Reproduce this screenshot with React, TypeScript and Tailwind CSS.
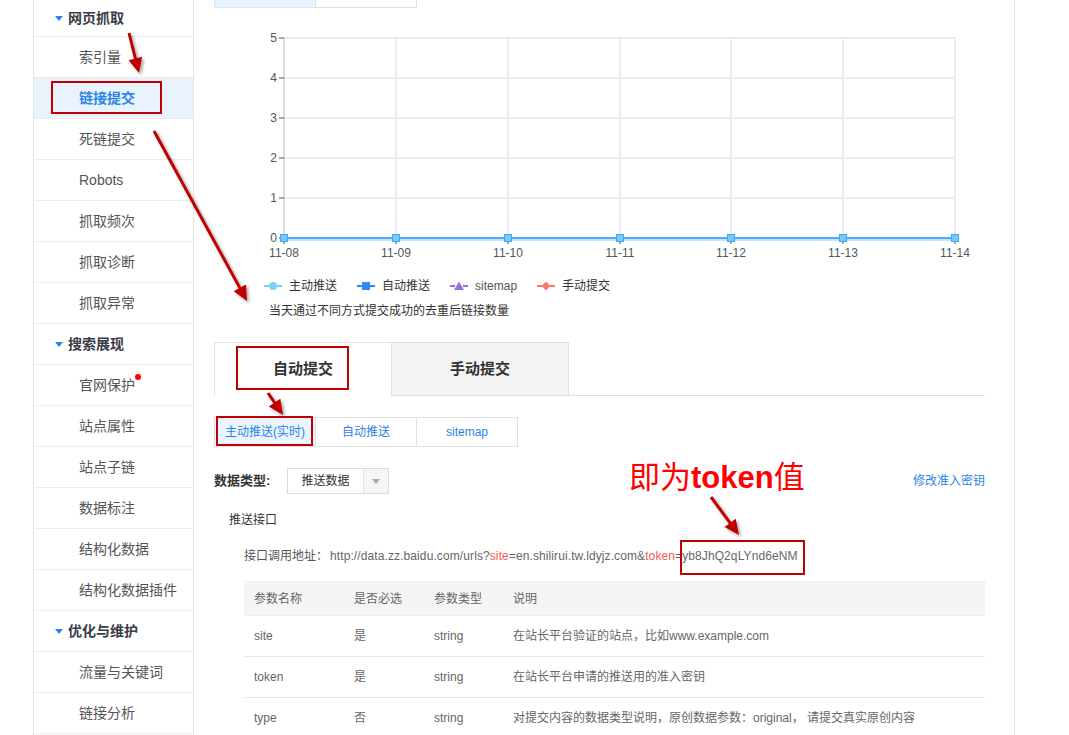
import React from "react";

const font = "font-['Liberation_Sans','Noto_Sans_CJK_SC',sans-serif]";

const sections = [
  {
    title: "网页抓取",
    items: ["索引量", "链接提交", "死链提交", "Robots", "抓取频次", "抓取诊断", "抓取异常"],
  },
  {
    title: "搜索展现",
    items: ["官网保护", "站点属性", "站点子链", "数据标注", "结构化数据", "结构化数据插件"],
  },
  { title: "优化与维护", items: ["流量与关键词", "链接分析"] },
];

const xs = [70, 182, 294, 406, 517, 629, 741];
const ys = [210, 170, 130, 90, 50, 10];
const dates = ["11-08", "11-09", "11-10", "11-11", "11-12", "11-13", "11-14"];

const rows = [
  { name: "site", req: "是", type: "string", desc: <>在站长平台验证的站点，比如www.example.com</> },
  { name: "token", req: "是", type: "string", desc: <>在站长平台申请的推送用的准入密钥</> },
  {
    name: "type",
    req: "否",
    type: "string",
    desc: <>对提交内容的数据类型说明，原创数据参数：original， 请提交真实原创内容</>,
  },
];

const Sidebar = () => (
  <aside className="ml-[33px] w-[161px] shrink-0 border-x border-[#e6e6e6] bg-white">
    {sections.map((s, si) => (
      <div key={s.title}>
        <div
          className={`${si === 0 ? "h-[37px]" : "h-[41px]"} flex items-center border-b border-[#ececec] pl-[21px]`}
        >
          <span className="mr-[5px] h-0 w-0 border-x-[4px] border-t-[5px] border-x-transparent border-t-[#2b84e8]" />
          <span className="text-[14px] font-bold text-[#3a3a48]">{s.title}</span>
        </div>
        {s.items.map((it) => (
          <div
            key={it}
            className={`flex h-[41px] items-center border-b border-[#ececec] pl-[45px] text-[14px] ${
              it === "链接提交" ? "bg-[#e8f3fd] font-bold text-[#2b84e8]" : "text-[#555]"
            }`}
          >
            <span className="relative">
              {it}
              {it === "官网保护" && (
                <span className="absolute -right-[6px] top-[-1px] h-[6px] w-[6px] rounded-full bg-[#ff0000]" />
              )}
            </span>
          </div>
        ))}
      </div>
    ))}
  </aside>
);

const Chart = () => (
  <svg width="771" height="236" className="mt-[20px] block">
    {ys.map((y) => (
      <line key={y} x1={70} x2={741} y1={y} y2={y} stroke="#ececec" strokeWidth={2} />
    ))}
    {xs.map((x) => (
      <line key={x} x1={x} x2={x} y1={10} y2={210} stroke="#ececec" strokeWidth={2} />
    ))}
    <line x1={70} x2={70} y1={10} y2={210} stroke="#dcdcdc" strokeWidth={2} />
    {ys.map((y, i) => (
      <g key={"y" + y}>
        <line x1={65} x2={70} y1={y} y2={y} stroke="#555" strokeWidth={1} />
        <text x={63} y={y + 4} textAnchor="end" fontSize="12" fill="#555" fontFamily="Liberation Sans">
          {i}
        </text>
      </g>
    ))}
    {xs.map((x, i) => (
      <g key={"x" + x}>
        <line x1={x} x2={x} y1={210} y2={216} stroke="#555" strokeWidth={1} />
        <text x={x} y={229} textAnchor="middle" fontSize="12" fill="#555" fontFamily="Liberation Sans">
          {dates[i]}
        </text>
      </g>
    ))}
    <line x1={70} x2={741} y1={211} y2={211} stroke="#bfe4fb" strokeWidth={4} />
    <line x1={70} x2={741} y1={210} y2={210} stroke="#4eaeee" strokeWidth={2} />
    {xs.map((x) => (
      <rect key={"m" + x} x={x - 3.5} y={206.5} width={7} height={7} fill="#70cbff" stroke="#46a6ea" strokeWidth={1} />
    ))}
  </svg>
);

const LegendIcon = ({ color, shape }: { color: string; shape: string }) => (
  <svg width="18" height="10" className="mr-[7px]">
    <line x1={0} x2={5} y1={5} y2={5} stroke={color} strokeWidth={2} />
    <line x1={13} x2={18} y1={5} y2={5} stroke={color} strokeWidth={2} />
    {shape === "circle" && <circle cx={9} cy={5} r={4} fill={color} />}
    {shape === "square" && <rect x={5} y={1} width={8} height={8} fill={color} />}
    {shape === "triangle" && <polygon points="9,0.5 14,9 4,9" fill={color} />}
    {shape === "diamond" && <polygon points="9,0.5 13.5,5 9,9.5 4.5,5" fill={color} />}
  </svg>
);

const legend = [
  { label: "主动推送", color: "#7fd0f6", shape: "circle" },
  { label: "自动推送", color: "#2d8cf0", shape: "square" },
  { label: "sitemap", color: "#9a72da", shape: "triangle" },
  { label: "手动提交", color: "#f77b6d", shape: "diamond" },
];

const Arrow = ({ x1, y1, x2, y2 }: { x1: number; y1: number; x2: number; y2: number }) => {
  const dx = x2 - x1;
  const dy = y2 - y1;
  const len = Math.hypot(dx, dy);
  const ux = dx / len;
  const uy = dy / len;
  const hl = 15;
  const hw = 7;
  const bx = x2 - ux * hl;
  const by = y2 - uy * hl;
  const pts = `${x2},${y2} ${bx - uy * hw},${by + ux * hw} ${bx + uy * hw},${by - ux * hw}`;
  return (
    <g filter="url(#shadow)">
      <line x1={x1} y1={y1} x2={bx + ux * 2} y2={by + uy * 2} stroke="#c00000" strokeWidth={3} />
      <polygon points={pts} fill="#c00000" />
    </g>
  );
};

const Annotations = () => (
  <>
    <svg width="1069" height="735" className="pointer-events-none absolute left-0 top-0">
      <defs>
        <filter id="shadow" x="-20%" y="-20%" width="140%" height="140%">
          <feDropShadow dx="2" dy="2" stdDeviation="1.5" floodColor="#000" floodOpacity="0.35" />
        </filter>
      </defs>
      <Arrow x1={129} y1={33} x2={139} y2={73} />
      <Arrow x1={154} y1={131} x2={247} y2={301} />
      <Arrow x1={268} y1={393} x2={283} y2={415} />
      <Arrow x1={711} y1={497} x2={739} y2={535} />
      <rect x={52} y={82} width={109} height={31} fill="none" stroke="#c00000" strokeWidth={2} />
      <rect x={237} y={347} width={111} height={42} fill="none" stroke="#c00000" strokeWidth={2} />
      <rect x={217} y={417} width={95} height={28} fill="none" stroke="#c00000" strokeWidth={2} />
      <rect x={681} y={541} width={123} height={33} fill="none" stroke="#c00000" strokeWidth={2} />
    </svg>
    <div className="pointer-events-none absolute left-[629px] top-[458px] text-[31px] leading-[40px] text-[#ff0000]">
      即为<span className="font-bold">token</span>值
    </div>
  </>
);

export default function App() {
  return (
    <div className={`relative flex h-[735px] w-[1069px] overflow-hidden bg-white ${font}`}>
      <Sidebar />
      <main className="w-[821px] shrink-0 border-r border-[#e8e8e8] pl-[20px] pr-[29px]">
        <div className="-mt-[22px] flex">
          <div className="h-[30px] w-[102px] border border-[#d6e8f8] bg-[#e8f3fd]" />
          <div className="-ml-px h-[30px] w-[102px] border border-[#e0e0e0] bg-white" />
        </div>

        <Chart />

        <div className="mt-[14px] flex h-[16px] items-center pl-[50px] text-[12px] text-[#333]">
          {legend.map((l) => (
            <div key={l.label} className="mr-[20px] flex items-center">
              <LegendIcon color={l.color} shape={l.shape} />
              <span className={l.label === "sitemap" ? "text-[#555]" : ""}>{l.label}</span>
            </div>
          ))}
        </div>
        <div className="mt-[9px] h-[16px] pl-[55px] text-[12px] leading-[16px] text-[#333]">
          当天通过不同方式提交成功的去重后链接数量
        </div>

        <div className="mt-[23px] flex h-[54px]">
          <div className="flex w-[177px] items-center justify-center border-l border-t border-[#e3e3e3] bg-white text-[15px] font-bold text-[#333]">
            自动提交
          </div>
          <div className="flex w-[178px] items-center justify-center border border-[#e0e0e0] bg-[#f3f3f3] text-[15px] font-bold text-[#333]">
            手动提交
          </div>
          <div className="flex-1 border-b border-[#e0e0e0]" />
        </div>

        <div className="mt-[21px] flex h-[30px]">
          {["主动推送(实时)", "自动推送", "sitemap"].map((t, i) => (
            <div
              key={t}
              className={`flex w-[102px] items-center justify-center border border-[#e0e0e0] text-[12px] text-[#2b83e6] ${
                i === 0 ? "bg-[#eaf5fe]" : "-ml-px bg-white"
              }`}
            >
              {t}
            </div>
          ))}
        </div>

        <div className="mt-[21px] flex h-[26px] items-center">
          <span className="w-[73px] text-[13px] font-bold text-[#333]">数据类型:</span>
          <div className="flex h-[26px] w-[102px] border border-[#dcdcdc]">
            <span className="flex flex-1 items-center justify-center text-[12px] text-[#333]">推送数据</span>
            <span className="flex w-[25px] items-center justify-center border-l border-[#e3e3e3] bg-[#f5f5f5]">
              <span className="h-0 w-0 border-x-[4px] border-t-[5px] border-x-transparent border-t-[#aaa]" />
            </span>
          </div>
          <span className="ml-auto text-[12px] text-[#2b83e6]">修改准入密钥</span>
        </div>

        <div className="mt-[18px] h-[16px] pl-[15px] text-[12px] leading-[16px] text-[#333]">推送接口</div>

        <div className="mt-[20px] h-[16px] pl-[30px] text-[12px] leading-[16px] text-[#555]">
          接口调用地址：
          <span className="ml-[2px] tracking-[0.1px] text-[#666]">
            http://data.zz.baidu.com/urls?<span className="text-[#f55a5a]">site</span>=en.shilirui.tw.ldyjz.com&amp;
            <span className="text-[#f55a5a]">token</span>=yb8JhQ2qLYnd6eNM
          </span>
        </div>

        <div className="ml-[30px] mt-[17px] text-[12px] text-[#666]">
          <div className="flex h-[35px] items-center border-y border-[#ececec] bg-[#f5f5f5]">
            <span className="w-[100px] pl-[10px]">参数名称</span>
            <span className="w-[80px] pl-[10px]">是否必选</span>
            <span className="w-[79px] pl-[10px]">参数类型</span>
            <span className="flex-1 pl-[10px]">说明</span>
          </div>
          {rows.map((r) => (
            <div key={r.name} className="flex h-[41px] items-center border-b border-[#e8e8e8]">
              <span className="w-[100px] pl-[10px]">{r.name}</span>
              <span className="w-[80px] pl-[10px]">{r.req}</span>
              <span className="w-[79px] pl-[10px]">{r.type}</span>
              <span className="flex-1 pl-[10px]">{r.desc}</span>
            </div>
          ))}
        </div>
      </main>
      <Annotations />
    </div>
  );
}
